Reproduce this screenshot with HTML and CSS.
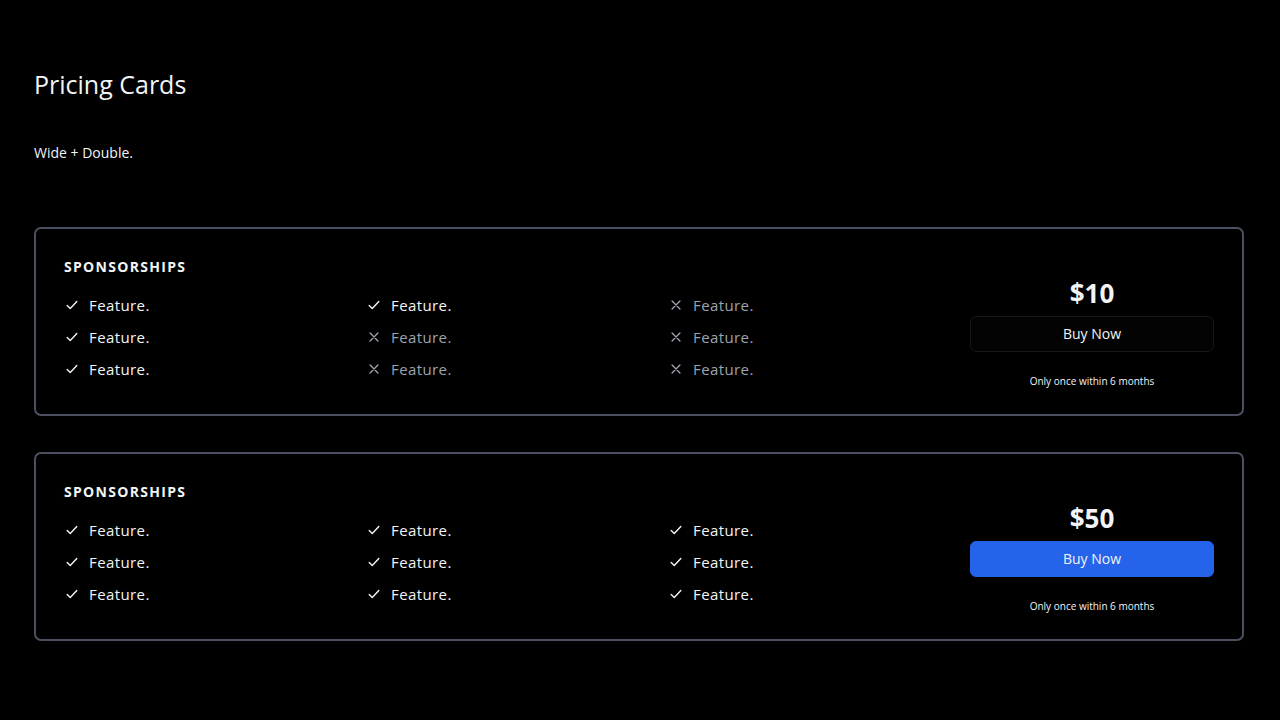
FILE: index.html
```html
<!DOCTYPE html>
<html lang="en">
<head>
    <meta charset="UTF-8">
    <meta name="viewport" content="width=device-width, initial-scale=1.0">
    <title>Pricing Cards</title>
    <link rel="stylesheet" href="styles.css">
</head>
<body>
    <h1 class="page-title">Pricing Cards</h1>
    <p class="page-sub">Wide + Double.</p>

    <div class="card">
        <div class="card-main">
            <div class="card-label">SPONSORSHIPS</div>
            <ul class="features">
                <li class="feature"><span class="icon yes"></span>Feature.</li>
                <li class="feature"><span class="icon yes"></span>Feature.</li>
                <li class="feature"><span class="icon yes"></span>Feature.</li>
                <li class="feature"><span class="icon yes"></span>Feature.</li>
                <li class="feature off"><span class="icon no"></span>Feature.</li>
                <li class="feature off"><span class="icon no"></span>Feature.</li>
                <li class="feature off"><span class="icon no"></span>Feature.</li>
                <li class="feature off"><span class="icon no"></span>Feature.</li>
                <li class="feature off"><span class="icon no"></span>Feature.</li>
            </ul>
        </div>
        <div class="card-price">
            <div class="price">$10</div>
            <button class="buy">Buy Now</button>
            <div class="note">Only once within 6 months</div>
        </div>
    </div>

    <div class="card">
        <div class="card-main">
            <div class="card-label">SPONSORSHIPS</div>
            <ul class="features">
                <li class="feature"><span class="icon yes"></span>Feature.</li>
                <li class="feature"><span class="icon yes"></span>Feature.</li>
                <li class="feature"><span class="icon yes"></span>Feature.</li>
                <li class="feature"><span class="icon yes"></span>Feature.</li>
                <li class="feature"><span class="icon yes"></span>Feature.</li>
                <li class="feature"><span class="icon yes"></span>Feature.</li>
                <li class="feature"><span class="icon yes"></span>Feature.</li>
                <li class="feature"><span class="icon yes"></span>Feature.</li>
                <li class="feature"><span class="icon yes"></span>Feature.</li>
            </ul>
        </div>
        <div class="card-price">
            <div class="price">$50</div>
            <button class="buy primary">Buy Now</button>
            <div class="note">Only once within 6 months</div>
        </div>
    </div>

    <script>
        // swap the empty icon spans for inline svg
        const check = '<svg viewBox="0 0 16 16" width="14" height="14"><path d="M2.5 8.5l3.5 3.5 7.5-8" fill="none" stroke="currentColor" stroke-width="1.6" stroke-linecap="round" stroke-linejoin="round"/></svg>';
        const cross = '<svg viewBox="0 0 16 16" width="14" height="14"><path d="M3.5 3.5l9 9M12.5 3.5l-9 9" fill="none" stroke="currentColor" stroke-width="1.5" stroke-linecap="round"/></svg>';
        document.querySelectorAll('.icon.yes').forEach(el => el.innerHTML = check);
        document.querySelectorAll('.icon.no').forEach(el => el.innerHTML = cross);
    </script>
</body>
</html>
```

FILE: styles.css
```css
:root {
    --bg: #000000;
    --text: #f3f4f6;
    --text-muted: #9ca3af;
    --border: #4b5060;
    --primary: #2563eb;
}

* {
    box-sizing: border-box;
    margin: 0;
    padding: 0;
}

body {
    background-color: var(--bg);
    color: var(--text);
    font-family: 'Open Sans', 'Noto Sans', Arial, sans-serif;
    padding: 64px 36px 40px 34px;
}

.page-title {
    font-size: 25px;
    font-weight: 400;
    line-height: 40px;
}

.page-sub {
    font-size: 14px;
    margin-top: 39px;
    line-height: 20px;
}

.card {
    display: flex;
    align-items: center;
    border: 2px solid var(--border);
    border-radius: 7px;
    padding: 28px;
    margin-top: 64px;
    height: 189px;
}

.card + .card {
    margin-top: 36px;
}

.card-main {
    flex: 1;
    align-self: flex-start;
}

.card-label {
    font-size: 14px;
    font-weight: 700;
    letter-spacing: 1.3px;
    line-height: 20px;
}

.features {
    list-style: none;
    display: grid;
    grid-template-columns: repeat(3, 302px);
    grid-auto-flow: column;
    grid-template-rows: repeat(3, 32px);
    margin-top: 12px;
}

.feature {
    display: flex;
    align-items: center;
    font-size: 15px;
    letter-spacing: 0.4px;
}

.feature.off {
    color: var(--text-muted);
}

.icon {
    display: flex;
    width: 24px;
    margin-left: 1px;
}

.card-price {
    width: 246px;
    display: flex;
    flex-direction: column;
    align-items: center;
    margin-top: 20px;
}

.price {
    font-size: 26px;
    font-weight: 700;
    line-height: 34px;
}

.buy {
    width: 100%;
    height: 36px;
    margin-top: 6px;
    border: 1px solid #15171c;
    border-radius: 6px;
    background-color: #030303;
    color: var(--text);
    font-family: inherit;
    font-size: 14px;
    cursor: pointer;
}

.buy.primary {
    background-color: var(--primary);
    border-color: var(--primary);
}

.note {
    font-size: 10px;
    margin-top: 22px;
    line-height: 14px;
}
```
